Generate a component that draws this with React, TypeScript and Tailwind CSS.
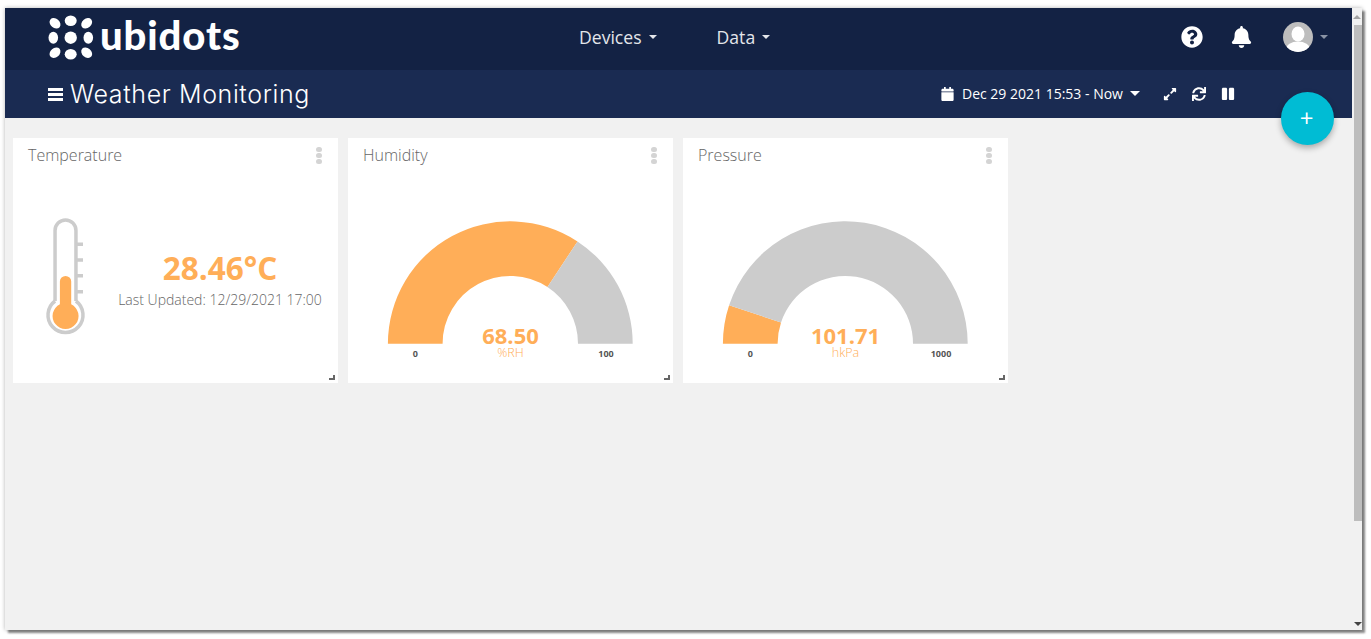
import React from 'react';
import { FaBell, FaCalendar, FaExpandAlt, FaPause, FaQuestionCircle, FaSync } from 'react-icons/fa';

const ORANGE = '#ffae58';
const GREY = '#cccccc';

// annular sector between two fractions of the half circle
const arc = (cx: number, cy: number, r1: number, r2: number, from: number, to: number) => {
  const pt = (r: number, f: number) => {
    const a = Math.PI * (1 - f);
    return `${(cx + r * Math.cos(a)).toFixed(2)} ${(cy - r * Math.sin(a)).toFixed(2)}`;
  };
  return `M${pt(r1, from)} A${r1} ${r1} 0 0 1 ${pt(r1, to)} L${pt(r2, to)} A${r2} ${r2} 0 0 0 ${pt(r2, from)} Z`;
};

const Caret = ({ className }: { className: string }) => (
  <span className={`inline-block w-0 h-0 border-x-[4px] border-x-transparent border-t-[4px] ${className}`} />
);

const Logo = () => {
  const dots = [
    [8, 12.3, 6, 4.6, 40],
    [23.7, 9.7, 6, 5.2, 0],
    [39.7, 12.3, 6, 4.6, -40],
    [6.3, 26.7, 4.8, 6, 0],
    [23.7, 26.7, 6.2, 6.2, 0],
    [41.3, 26.7, 4.8, 6, 0],
    [8, 41.7, 6, 4.6, -40],
    [23.7, 43.3, 6, 5.2, 0],
    [39.7, 41.7, 6, 4.6, 40],
  ];
  return (
    <svg width="58" height="52" viewBox="0 0 58 52" className="block">
      {dots.map(([x, y, rx, ry, rot]) => (
        <ellipse key={`${x}-${y}`} cx={x} cy={y} rx={rx} ry={ry} fill="#fff" transform={`rotate(${rot} ${x} ${y})`} />
      ))}
    </svg>
  );
};

const Avatar = () => (
  <svg width="30" height="30" viewBox="0 0 30 30" className="block">
    <circle cx="15" cy="15" r="15" fill="#bdbdbd" />
    <clipPath id="avatar-clip">
      <circle cx="15" cy="15" r="15" />
    </clipPath>
    <g clipPath="url(#avatar-clip)" fill="#fff">
      <ellipse cx="15" cy="12" rx="6.5" ry="7.5" />
      <ellipse cx="15" cy="27" rx="12" ry="7.5" />
    </g>
  </svg>
);

const Thermometer = () => (
  <svg width="42" height="120" viewBox="0 0 42 120" className="block">
    <g stroke={GREY} strokeWidth="3.5" fill="none">
      <path d="M10.05 83 V12.5 a10.45 10.45 0 0 1 20.9 0 V83" />
      <path d="M10.05 83 A17.5 17.5 0 1 0 30.95 83" />
      <path d="M31 26.3 H38 M31 42 H38 M31 57.7 H38 M31 73.7 H38" />
    </g>
    <path d="M14.9 86.3 V63.6 a5.65 5.65 0 0 1 11.3 0 V86.3 a13 13 0 1 1 -11.3 0 Z" fill={ORANGE} />
  </svg>
);

const Card = ({ title, children }: { title: string; children: React.ReactNode }) => (
  <div className="relative w-[325px] h-[245px] bg-white flex flex-col">
    <div className="h-[34px] pl-[15px] pr-[16px] flex items-center justify-between">
      <span className="text-[16px] font-light text-[#666666] leading-none">{title}</span>
      <span className="flex flex-col gap-[1px] mt-[1px]">
        <span className="w-[6px] h-[5px] rounded-full bg-[#d4d4d4]" />
        <span className="w-[6px] h-[5px] rounded-full bg-[#d4d4d4]" />
        <span className="w-[6px] h-[5px] rounded-full bg-[#d4d4d4]" />
      </span>
    </div>
    {children}
    <span className="absolute right-[3px] bottom-[3px] w-[6px] h-[5px] border-r-2 border-b-2 border-[#666666]" />
  </div>
);

const Gauge = ({ value, max, unit, text }: { value: number; max: number; unit: string; text: string }) => {
  const f = value / max;
  return (
    <svg width="325" height="211" viewBox="0 0 325 211" className="block" fontFamily="'Open Sans', sans-serif">
      <path d={arc(162.3, 171.7, 122.4, 67.7, 0, f)} fill={ORANGE} />
      <path d={arc(162.3, 171.7, 122.4, 67.7, f, 1)} fill={GREY} />
      <text x="162.5" y="172" textAnchor="middle" fontSize="22" fontWeight="700" fill={ORANGE}>{text}</text>
      <text x="162.5" y="184.5" textAnchor="middle" fontSize="12.5" fontWeight="300" fill={ORANGE}>{unit}</text>
      <text x="67.3" y="184.5" textAnchor="middle" fontSize="9" fontWeight="700" fill="#555555">0</text>
      <text x="258" y="184.5" textAnchor="middle" fontSize="9" fontWeight="700" fill="#555555">{max}</text>
    </svg>
  );
};

export default function App() {
  return (
    <div className="h-[639px] w-[1371px] bg-white pt-[8px] pl-[5px] overflow-hidden font-['Open_Sans',sans-serif]">
      <div className="relative w-[1357px] h-[622px] flex bg-[#f1f1f1] shadow-[3px_3px_2px_rgba(0,0,0,0.45),0_0_4px_rgba(0,0,0,0.3)]">
        <div className="flex-1 min-w-0 flex flex-col">
          <header className="h-[62px] bg-[#132244] flex items-center pl-[42px] pr-[24px] pb-[4px] text-white">
            <div className="flex items-center w-[532px] h-full">
              <Logo />
              <span className="ml-[-5px] mt-[-5px] text-[40px] font-['Lato',sans-serif] font-black leading-none tracking-[0.9px]">ubidots</span>
            </div>
            <nav className="flex items-center gap-[60px] text-[17.6px] text-[#e4e6eb]">
              <span className="flex items-center gap-[7px]">Devices <Caret className="border-t-[#e4e6eb]" /></span>
              <span className="flex items-center gap-[7px]">Data <Caret className="border-t-[#e4e6eb]" /></span>
            </nav>
            <div className="ml-auto flex items-center">
              <FaQuestionCircle className="w-[22px] h-[22px]" />
              <FaBell className="w-[21px] h-[22px] ml-[28px]" />
              <span className="ml-[31px]"><Avatar /></span>
              <Caret className="ml-[7px] mb-[1px] border-t-[#8a93a5]" />
            </div>
          </header>
          <div className="h-[48px] bg-[#1a2b52] flex items-center pl-[43px] text-white">
            <span className="flex flex-col gap-[2px] w-[15px]">
              <span className="h-[3px] bg-white" />
              <span className="h-[3px] bg-white" />
              <span className="h-[3px] bg-white" />
            </span>
            <span className="ml-[7px] text-[25px] font-['Inter',sans-serif] font-light leading-none tracking-[0.62px]">Weather Monitoring</span>
            <div className="ml-[631px] mt-[-1px] flex items-center text-[14px] font-medium">
              <FaCalendar className="w-[13px] h-[14px]" />
              <span className="ml-[8px]">Dec 29 2021 15:53 - Now</span>
              <Caret className="ml-[7px] border-x-[5px] border-t-[5px] border-t-white" />
              <FaExpandAlt className="ml-[23px] w-[14px] h-[14px]" />
              <FaSync className="ml-[15px] w-[14px] h-[14px]" />
              <FaPause className="ml-[15px] w-[14px] h-[14px]" />
            </div>
          </div>
          <main className="flex gap-[10px] pt-[20px] pl-[8px]">
            <Card title="Temperature">
              <div className="flex items-start pl-[32px] pt-[46px]">
                <Thermometer />
                <div className="ml-[31px] mt-[30px] w-[204px] flex flex-col items-center">
                  <span className="text-[31.5px] font-bold leading-[40px] text-[#ffae58] whitespace-nowrap">28.46°C</span>
                  <span className="mt-[1px] text-[14px] font-light leading-[22px] text-[#666666] whitespace-nowrap">Last Updated: 12/29/2021 17:00</span>
                </div>
              </div>
            </Card>
            <Card title="Humidity">
              <Gauge value={68.5} max={100} unit="%RH" text="68.50" />
            </Card>
            <Card title="Pressure">
              <Gauge value={101.71} max={1000} unit="hkPa" text="101.71" />
            </Card>
          </main>
        </div>
        <div className="w-[10px] bg-[#f1f1f1] flex flex-col items-end">
          <span className="mt-[7px] mr-[1px] w-0 h-0 border-x-[4px] border-x-transparent border-b-[4px] border-b-[#a3a3a3]" />
          <div className="mt-[6px] w-[8px] h-[496px] bg-[#bdbdbd]" />
          <Caret className="mt-auto mb-[4px] border-x-[3px] border-t-[4px] border-t-[#444444]" />
        </div>
        <button className="absolute left-[1276px] top-[84px] w-[53px] h-[53px] pb-[2px] pr-[2px] rounded-full bg-[#00bcd4] text-white text-[24px] font-normal leading-none shadow-[0_3px_6px_rgba(0,0,0,0.3)]">+</button>
      </div>
    </div>
  );
}
